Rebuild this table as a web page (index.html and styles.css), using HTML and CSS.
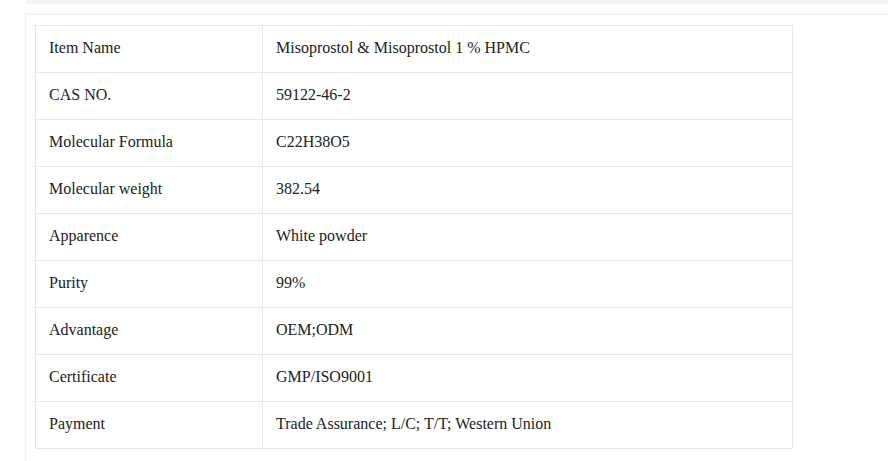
FILE: index.html
```html
<!DOCTYPE html>
<html>
<head>
<meta charset="utf-8">
<link rel="stylesheet" href="styles.css">
</head>
<body>
<div class="topbar"></div>
<div class="panel">
  <table class="spec">
    <tr><td class="k">Item Name</td><td>Misoprostol &amp; Misoprostol 1 % HPMC</td></tr>
    <tr><td class="k">CAS NO.</td><td>59122-46-2</td></tr>
    <tr><td class="k">Molecular Formula</td><td>C22H38O5</td></tr>
    <tr><td class="k">Molecular weight</td><td>382.54</td></tr>
    <tr><td class="k">Apparence</td><td>White powder</td></tr>
    <tr><td class="k">Purity</td><td>99%</td></tr>
    <tr><td class="k">Advantage</td><td>OEM;ODM</td></tr>
    <tr><td class="k">Certificate</td><td>GMP/ISO9001</td></tr>
    <tr><td class="k">Payment</td><td>Trade Assurance; L/C; T/T; Western Union</td></tr>
  </table>
</div>
</body>
</html>
```
FILE: styles.css
```css
html, body {
  margin: 0;
  padding: 0;
  background: #fff;
  font-family: "Liberation Serif", "Times New Roman", serif;
  color: #222;
}
.topbar {
  margin-left: 26px;
  height: 4px;
  background: #f4f4f4;
}
.panel {
  margin-top: 9px;
  margin-left: 25px;
  border-top: 2px solid #f3f3f3;
  border-left: 1px solid #f0f0f0;
  padding: 10px 0 20px 9px;
}
.spec {
  border-collapse: collapse;
  width: 758px;
  font-size: 16px;
}
.spec td {
  border: 1px solid #e8e8e8;
  height: 47px;
  box-sizing: border-box;
  padding: 0 13px 2px;
  line-height: 22px;
  vertical-align: middle;
}
.spec td.k {
  width: 227px;
}
```
